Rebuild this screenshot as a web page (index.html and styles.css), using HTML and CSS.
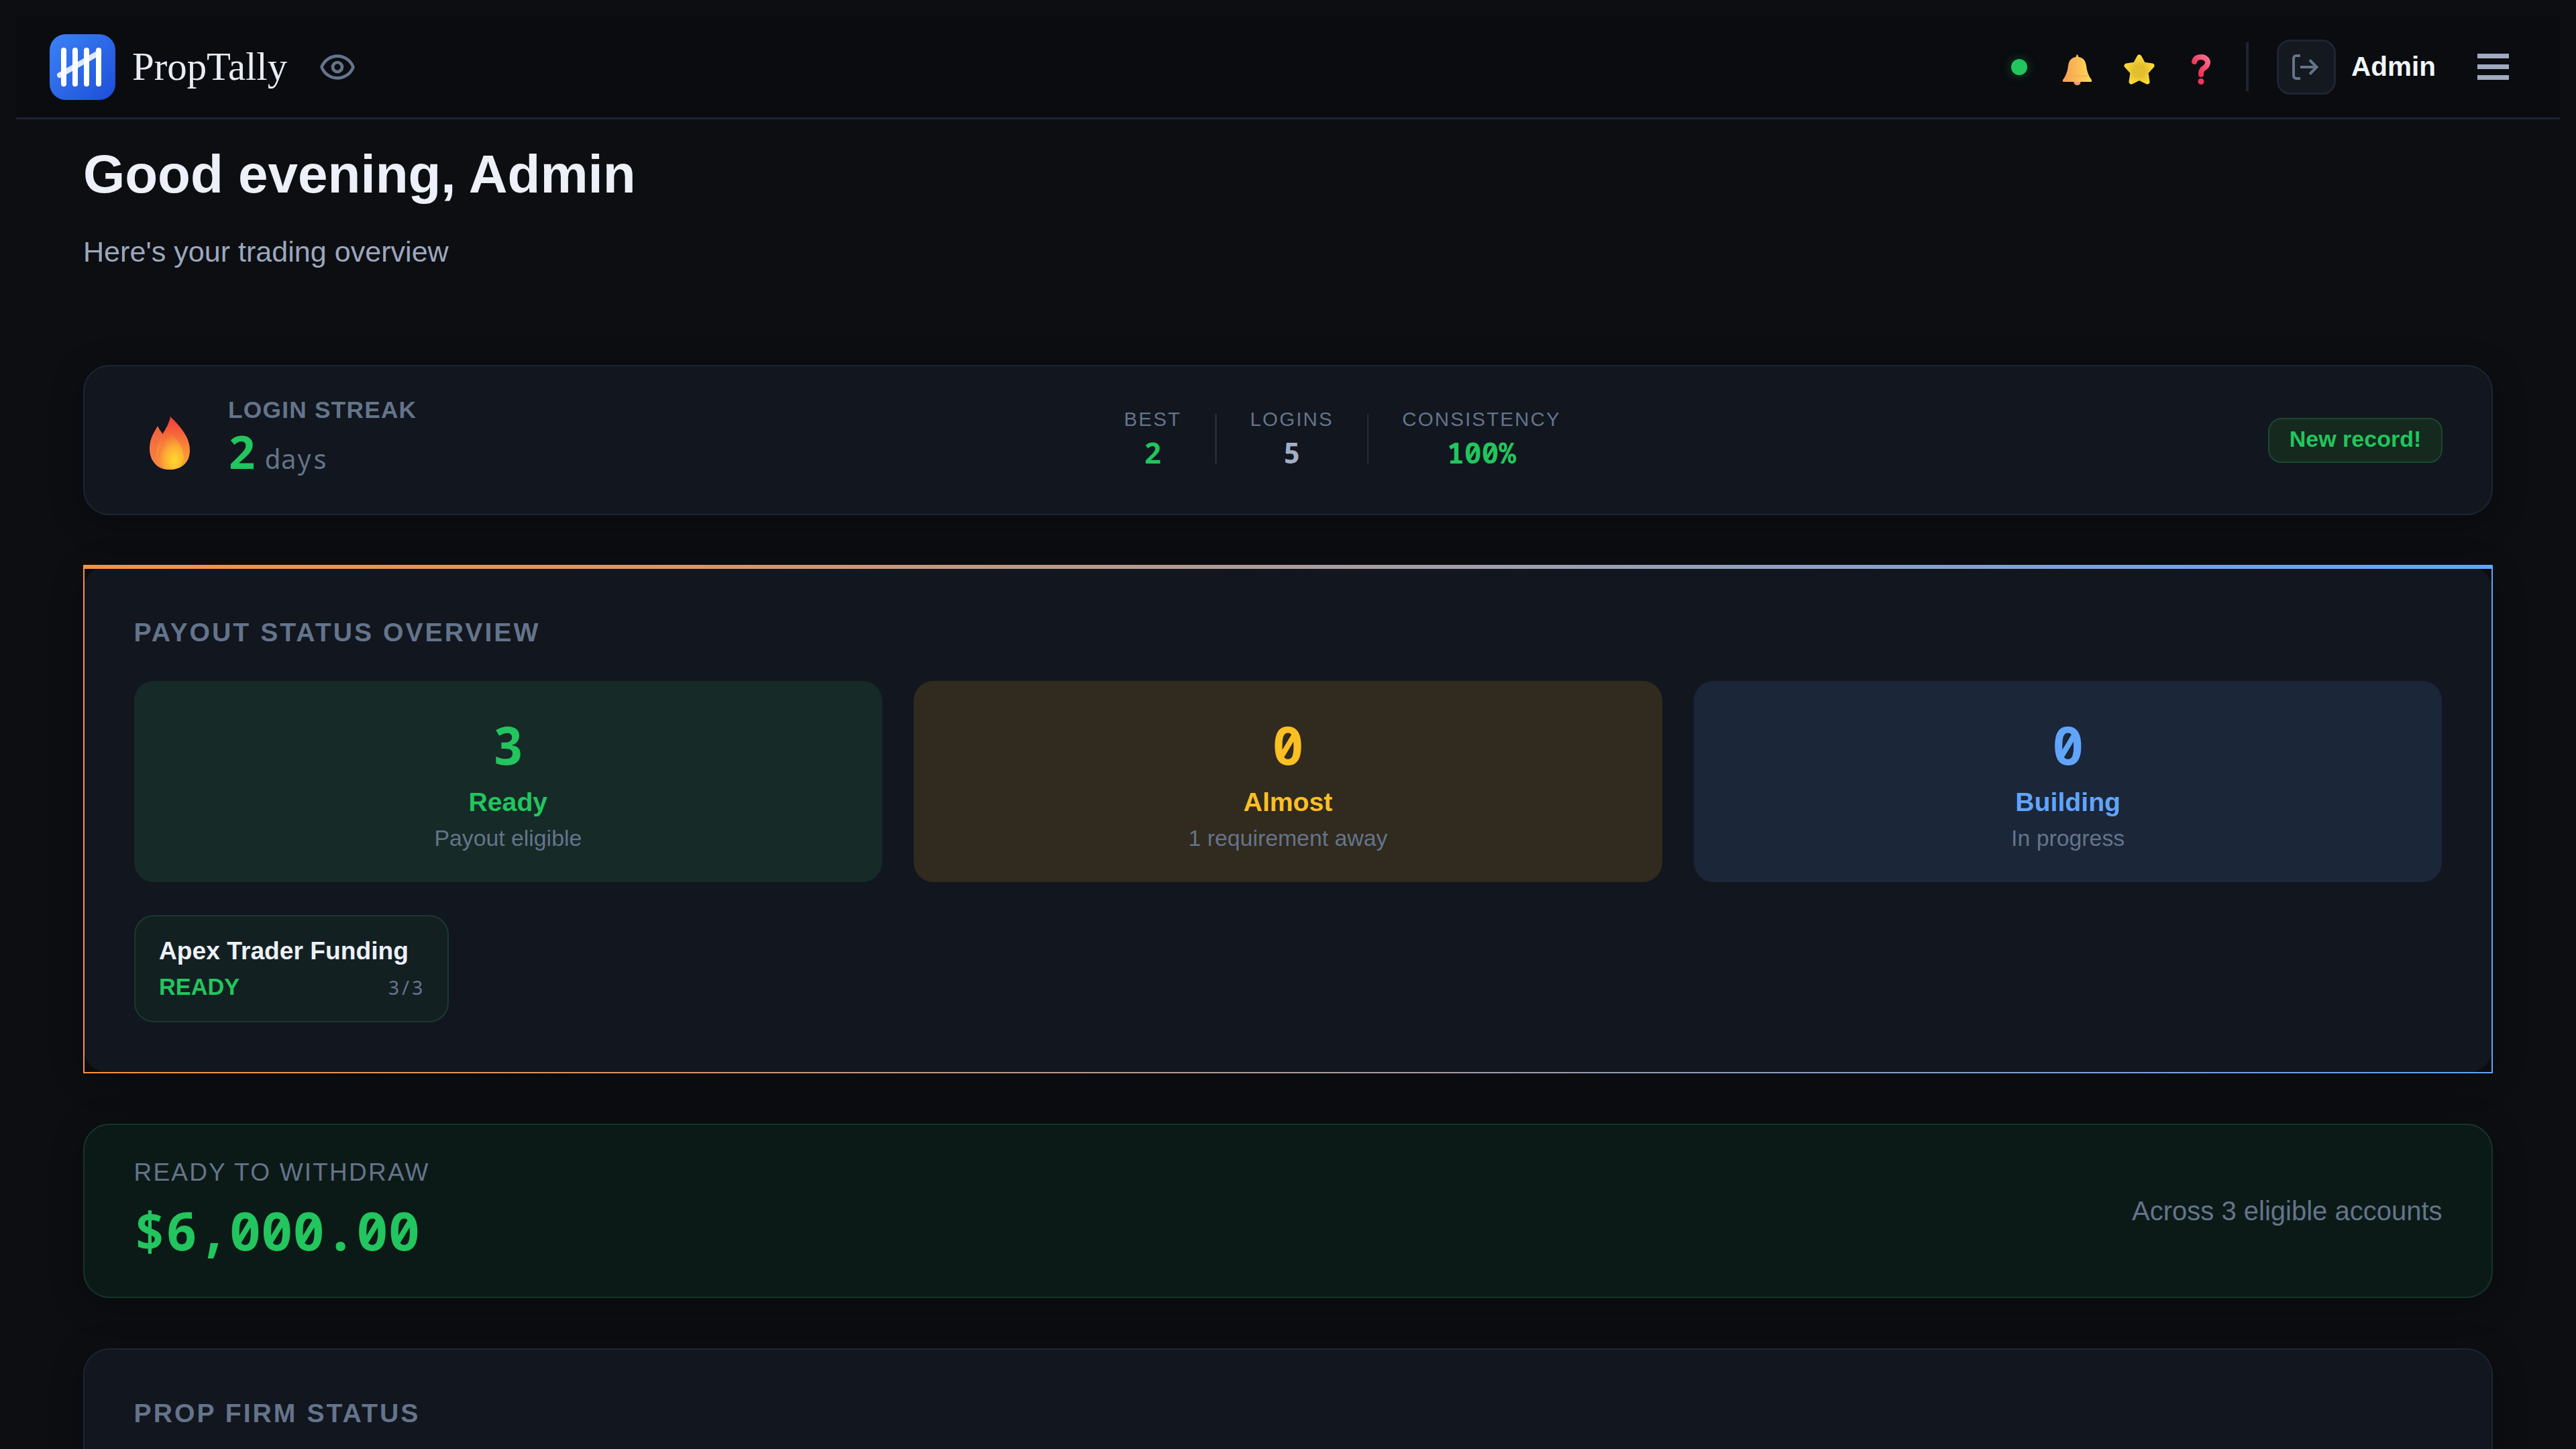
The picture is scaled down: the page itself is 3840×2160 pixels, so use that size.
FILE: index.html
```html
<!DOCTYPE html>
<html lang="en">
<head>
  <meta charset="UTF-8" />
  <meta name="viewport" content="width=device-width, initial-scale=1.0" />
  <title>PropTally</title>
  <link rel="stylesheet" href="styles.css">
</head>
<body>
  <header class="topbar">
    <div class="brand">
      <svg class="logo" viewBox="0 0 98 98">
        <defs>
          <linearGradient id="logoBg" x1="0" y1="0" x2="1" y2="1">
            <stop offset="0" stop-color="#3b82f6" />
            <stop offset="1" stop-color="#1d4ed8" />
          </linearGradient>
        </defs>
        <rect width="98" height="98" rx="24" fill="url(#logoBg)" />
        <path d="M15 61 L73 28" stroke="#fff" stroke-opacity="0.85" stroke-width="8" stroke-linecap="round" />
        <path d="M21 24V74M38 24V74M55 24V74M73 24V74" stroke="#fff" stroke-width="8" stroke-linecap="round" />
      </svg>
      <span class="brand-name">PropTally</span>
      <svg class="eye" viewBox="0 0 24 24" fill="none" stroke="#64748b" stroke-width="2">
        <path d="M2.062 12.348a1 1 0 0 1 0-.696 10.75 10.75 0 0 1 19.876 0 1 1 0 0 1 0 .696 10.75 10.75 0 0 1-19.876 0" />
        <circle cx="12" cy="12" r="3" />
      </svg>
    </div>
    <div class="top-actions">
      <span class="status-dot"></span>
      <div class="emoji-group">
        <span class="emoji-box">
          <svg width="43" height="46" viewBox="0 0 43 46">
            <defs>
              <linearGradient id="bellFill" x1="0" y1="0" x2="1" y2="0">
                <stop offset="0" stop-color="#f59e52" />
                <stop offset="1" stop-color="#ffdb58" />
              </linearGradient>
            </defs>
            <ellipse cx="21.5" cy="42" rx="5" ry="4" fill="#f59a7a" />
            <path d="M21.5 0 C23 1 23 3 23.5 4 C31 5 34 10 35 17 C36 26 39 33 43 38 V41 H0 V38 C4 33 7 26 8 17 C9 10 12 5 19.500 4 C20 3 20 1 21.500 0Z" fill="url(#bellFill)" />
            <path d="M5 32 H38" stroke="#f4a64a" stroke-width="2" stroke-opacity="0.6" />
          </svg>
        </span>
        <span class="emoji-box">
          <svg width="46" height="46" viewBox="0 0 46 46">
            <defs>
              <radialGradient id="starFill" cx="0.5" cy="0.55" r="0.55">
                <stop offset="0.4" stop-color="#e2bd30" />
                <stop offset="1" stop-color="#ffd934" />
              </radialGradient>
            </defs>
            <path d="M23 4 L29 15 L42 17 L33 27 L35 41 L23 35 L11 41 L13 27 L4 17 L17 15Z" fill="url(#starFill)" stroke="url(#starFill)" stroke-width="7" stroke-linejoin="round" />
          </svg>
        </span>
        <span class="emoji-box">
          <svg width="28" height="45" viewBox="0 0 28 45">
            <defs>
              <linearGradient id="askFill" x1="0" y1="1" x2="1" y2="0">
                <stop offset="0" stop-color="#ea1f47" />
                <stop offset="1" stop-color="#ff6d90" />
              </linearGradient>
            </defs>
            <path d="M4 11 C5 6 9 4 14 4 C20 4 24 8 24 12 C24 18 19 20 16.500 22 C14.500 24 14 26 14 30" fill="none" stroke="url(#askFill)" stroke-width="8" stroke-linecap="round" />
            <circle cx="14" cy="40.500" r="4.500" fill="#f6335f" />
          </svg>
        </span>
      </div>
      <span class="vline"></span>
      <button class="logout-btn">
        <svg width="40" height="38" viewBox="0 0 40 38" fill="none" stroke="#64748b" stroke-width="4">
          <path d="M13 2H7a4 4 0 0 0-4 4v26a4 4 0 0 0 4 4h6" />
          <path d="M13 19H37M27 8.500L37.500 19L27 29.500" />
        </svg>
      </button>
      <span class="user-name">Admin</span>
      <div class="burger"><span></span><span></span><span></span></div>
    </div>
  </header>

  <main class="content">
    <h1 class="greeting">Good evening, Admin</h1>
    <p class="subtitle">Here's your trading overview</p>

    <section class="card streak">
      <div class="streak-main">
        <svg class="flame" viewBox="0 0 60 79">
          <defs>
            <linearGradient id="flameBack" x1="0.5" y1="0" x2="0.5" y2="1">
              <stop offset="0" stop-color="#ef3a3c" />
              <stop offset="0.6" stop-color="#fb8a38" />
              <stop offset="1" stop-color="#ffa92f" />
            </linearGradient>
            <linearGradient id="flameLeft" x1="0.5" y1="0" x2="0.5" y2="1">
              <stop offset="0" stop-color="#f0603f" />
              <stop offset="1" stop-color="#f58a45" />
            </linearGradient>
            <radialGradient id="flameCore" cx="0.65" cy="0.75" r="0.7">
              <stop offset="0" stop-color="#ffd92e" />
              <stop offset="0.55" stop-color="#fdae33" />
              <stop offset="1" stop-color="#f3763c" />
            </radialGradient>
          </defs>
          <path d="M12 14 C5 26 0 34 0 48 C0 66 12 79 28 79 L36 40 C26 34 18 26 12 14Z" fill="url(#flameLeft)" />
          <path d="M31 0 C45 14 60 30 60 50 C60 68 48 79 31 79 C16 79 8 66 11 48 C13 30 27 20 31 0Z" fill="url(#flameBack)" />
          <path d="M31 26 C42 34 51 46 51 60 C51 72 42 79 31 79 C20 79 12 72 12 60 C12 46 22 36 31 26Z" fill="url(#flameCore)" />
        </svg>
        <div class="streak-text">
          <div class="streak-label">LOGIN STREAK</div>
          <div class="streak-count"><span class="streak-num">2</span> <span class="streak-unit">days</span></div>
        </div>
      </div>
      <div class="streak-stats">
        <div class="stat">
          <div class="stat-label">BEST</div>
          <div class="stat-value green">2</div>
        </div>
        <span class="stat-line"></span>
        <div class="stat">
          <div class="stat-label">LOGINS</div>
          <div class="stat-value grey">5</div>
        </div>
        <span class="stat-line"></span>
        <div class="stat">
          <div class="stat-label">CONSISTENCY</div>
          <div class="stat-value green">100%</div>
        </div>
      </div>
      <span class="record-badge">New record!</span>
    </section>

    <section class="card payout">
      <h2 class="section-title">PAYOUT STATUS OVERVIEW</h2>
      <div class="tiles">
        <div class="tile tile-ready">
          <div class="tile-num">3</div>
          <div class="tile-label">Ready</div>
          <div class="tile-sub">Payout eligible</div>
        </div>
        <div class="tile tile-almost">
          <div class="tile-num">0</div>
          <div class="tile-label">Almost</div>
          <div class="tile-sub">1 requirement away</div>
        </div>
        <div class="tile tile-building">
          <div class="tile-num">0</div>
          <div class="tile-label">Building</div>
          <div class="tile-sub">In progress</div>
        </div>
      </div>
      <div class="firm-chip">
        <div class="firm-name">Apex Trader Funding</div>
        <div class="firm-row">
          <span class="firm-state">READY</span>
          <span class="firm-count">3/3</span>
        </div>
      </div>
    </section>

    <section class="card withdraw">
      <div class="withdraw-main">
        <div class="withdraw-label">READY TO WITHDRAW</div>
        <div class="withdraw-amount">$6,000.00</div>
      </div>
      <div class="withdraw-note">Across 3 eligible accounts</div>
    </section>

    <section class="card firms">
      <h2 class="section-title">PROP FIRM STATUS</h2>
    </section>
  </main>
</body>
</html>
```

FILE: styles.css
```css
* {
  box-sizing: border-box;
}
html, body {
  height: 2160px;
  overflow: hidden;
}
body {
  margin: 0;
  padding: 24px 24px 0;
  background: #0c0e12;
  color: #e8ecf4;
  font-family: "Liberation Sans", Arial, sans-serif;
}

/* top bar */
.topbar {
  display: flex;
  align-items: center;
  justify-content: space-between;
  height: 154px;
  padding: 0 76px 0 50px;
  background: #0a0c10;
  border-bottom: 3px solid #1e2433;
}
.brand {
  display: flex;
  align-items: center;
}
.logo {
  width: 98px;
  height: 98px;
}
.brand-name {
  margin-left: 25px;
  font-family: "Liberation Serif", "Times New Roman", serif;
  font-size: 58.8px;
  color: #e8ecf4;
}
.eye {
  width: 56px;
  height: 56px;
  margin-left: 47px;
}
.top-actions {
  display: flex;
  align-items: center;
}
.status-dot {
  width: 24px;
  height: 24px;
  border-radius: 50%;
  background: #22c55e;
  box-shadow: 0 0 16px rgba(34, 197, 94, 0.35);
}
.emoji-group {
  display: flex;
  gap: 33px;
  margin: 8px 0 0 45px;
}
.emoji-box {
  display: flex;
  justify-content: center;
  width: 59px;
}
.vline {
  width: 4px;
  height: 73px;
  margin: 0 42px 0 38px;
  background: #1e2433;
}
.logout-btn {
  display: flex;
  align-items: center;
  justify-content: center;
  width: 88px;
  height: 82px;
  padding: 0 5px 0 0;
  background: #14181f;
  border: 3px solid #1e2433;
  border-radius: 20px;
}
.user-name {
  margin-left: 23px;
  font-size: 40.5px;
  font-weight: bold;
  color: #f1f5f9;
}
.burger {
  display: flex;
  flex-direction: column;
  gap: 9px;
  width: 47px;
  margin-left: 62px;
}
.burger span {
  height: 7px;
  background: #a0aac0;
}

/* page */
.content {
  padding: 34px 100px 0;
}
.greeting {
  margin: 0;
  font-size: 80px;
  line-height: 96px;
  font-weight: bold;
  color: #edf0f8;
}
.subtitle {
  margin: 40px 0 142px;
  font-size: 43.1px;
  line-height: 54px;
  color: #9ca7bd;
}
.card {
  margin-bottom: 75px;
  background: #12161e;
  border: 2.45px solid #1e2433;
  border-radius: 39px;
  box-shadow: 0 10px 50px rgba(0, 0, 0, 0.3);
}
.green {
  color: #22c55e;
}
.grey {
  color: #a3adc4;
}

/* streak */
.streak {
  display: flex;
  align-items: center;
  justify-content: space-between;
  height: 224px;
  margin-bottom: 74px;
  padding: 0 73px 0 97px;
}
.streak-main {
  display: flex;
  align-items: center;
  gap: 57px;
}
.flame {
  width: 60px;
  height: 79px;
  margin-top: 8px;
}
.streak-text {
  padding-top: 12px;
}
.streak-label {
  font-size: 35.3px;
  line-height: 42px;
  font-weight: bold;
  letter-spacing: 1.22px;
  color: #64748b;
}
.streak-count {
  line-height: 82px;
  font-family: "Noto Sans Mono", "DejaVu Sans Mono", monospace;
}
.streak-num {
  font-size: 68.6px;
  font-weight: bold;
  color: #22c55e;
}
.streak-unit {
  margin-left: 4px;
  font-size: 39.2px;
  color: #64748b;
}
.streak-stats {
  display: flex;
  align-items: center;
  gap: 50px;
  margin-bottom: 4px;
}
.stat {
  text-align: center;
}
.stat-label {
  font-size: 29.4px;
  line-height: 36px;
  letter-spacing: 2.2px;
  color: #64748b;
}
.stat-value {
  margin-top: 6px;
  font-family: "Noto Sans Mono", "DejaVu Sans Mono", monospace;
  font-size: 43px;
  line-height: 52px;
  font-weight: bold;
}
.stat-line {
  width: 2.45px;
  height: 74px;
  background: #232b3c;
}
.record-badge {
  display: flex;
  align-items: center;
  justify-content: center;
  width: 260px;
  height: 67px;
  padding: 0 0 3px;
  font-size: 34px;
  font-weight: bold;
  color: #22c55e;
  background: #15291f;
  border: 2.45px solid #1a4a2e;
  border-radius: 20px;
}

/* payout overview */
.payout {
  position: relative;
  padding: 75px 73.5px 74px;
  border: 2.45px solid;
  border-image: linear-gradient(90deg, #fb923c, #60a5fa) 1;
}
.payout::before {
  content: "";
  position: absolute;
  top: -2.45px;
  left: -2.45px;
  right: -2.45px;
  height: 6px;
  background: linear-gradient(90deg, #fb923c, #60a5fa);
}
.section-title {
  margin: 0;
  font-size: 39.2px;
  line-height: 48px;
  font-weight: bold;
  letter-spacing: 3px;
  color: #64748b;
}
.tiles {
  display: grid;
  grid-template-columns: repeat(3, 1fr);
  gap: 47px;
  margin-top: 48px;
}
.tile {
  height: 300px;
  padding-top: 49px;
  text-align: center;
  border-radius: 29px;
}
.tile-ready {
  background: #162a27;
  color: #22c55e;
}
.tile-almost {
  background: #312a1e;
  color: #fbbf24;
}
.tile-building {
  background: #1b2638;
  color: #60a5fa;
}
.tile-num {
  font-family: "Noto Sans Mono", "DejaVu Sans Mono", monospace;
  font-size: 78.4px;
  line-height: 92px;
  font-weight: bold;
}
.tile-label {
  margin-top: 17px;
  font-size: 39.2px;
  line-height: 46px;
  font-weight: bold;
}
.tile-sub {
  margin-top: 9px;
  font-size: 33.8px;
  line-height: 42px;
  color: #64748b;
}
.firm-chip {
  width: 469px;
  height: 160px;
  margin-top: 49px;
  padding: 28px 35.5px 0;
  background: #132022;
  border: 2.45px solid #1a3a2c;
  border-radius: 29px;
}
.firm-name {
  font-size: 37.2px;
  line-height: 46px;
  font-weight: bold;
  color: #edf0f8;
}
.firm-row {
  display: flex;
  align-items: baseline;
  justify-content: space-between;
  margin-top: 10px;
  line-height: 42px;
}
.firm-state {
  font-size: 34.3px;
  font-weight: bold;
  color: #22c55e;
}
.firm-count {
  font-family: "Noto Sans Mono", "DejaVu Sans Mono", monospace;
  font-size: 29.4px;
  color: #64748b;
}

/* withdraw */
.withdraw {
  display: flex;
  align-items: center;
  justify-content: space-between;
  height: 260px;
  padding: 0 73.5px;
  background: #0c1a17;
  border: 2.45px solid #14362a;
}
.withdraw-main {
  padding-top: 4px;
}
.withdraw-label {
  font-size: 37px;
  line-height: 46px;
  letter-spacing: 2.2px;
  color: #64748b;
}
.withdraw-amount {
  margin-top: 8px;
  font-family: "Noto Sans Mono", "DejaVu Sans Mono", monospace;
  font-size: 79px;
  line-height: 110px;
  font-weight: bold;
  color: #22c55e;
}
.withdraw-note {
  font-size: 40px;
  color: #64748b;
}

/* prop firms */
.firms {
  min-height: 400px;
  padding: 71px 73.5px;
}
```
